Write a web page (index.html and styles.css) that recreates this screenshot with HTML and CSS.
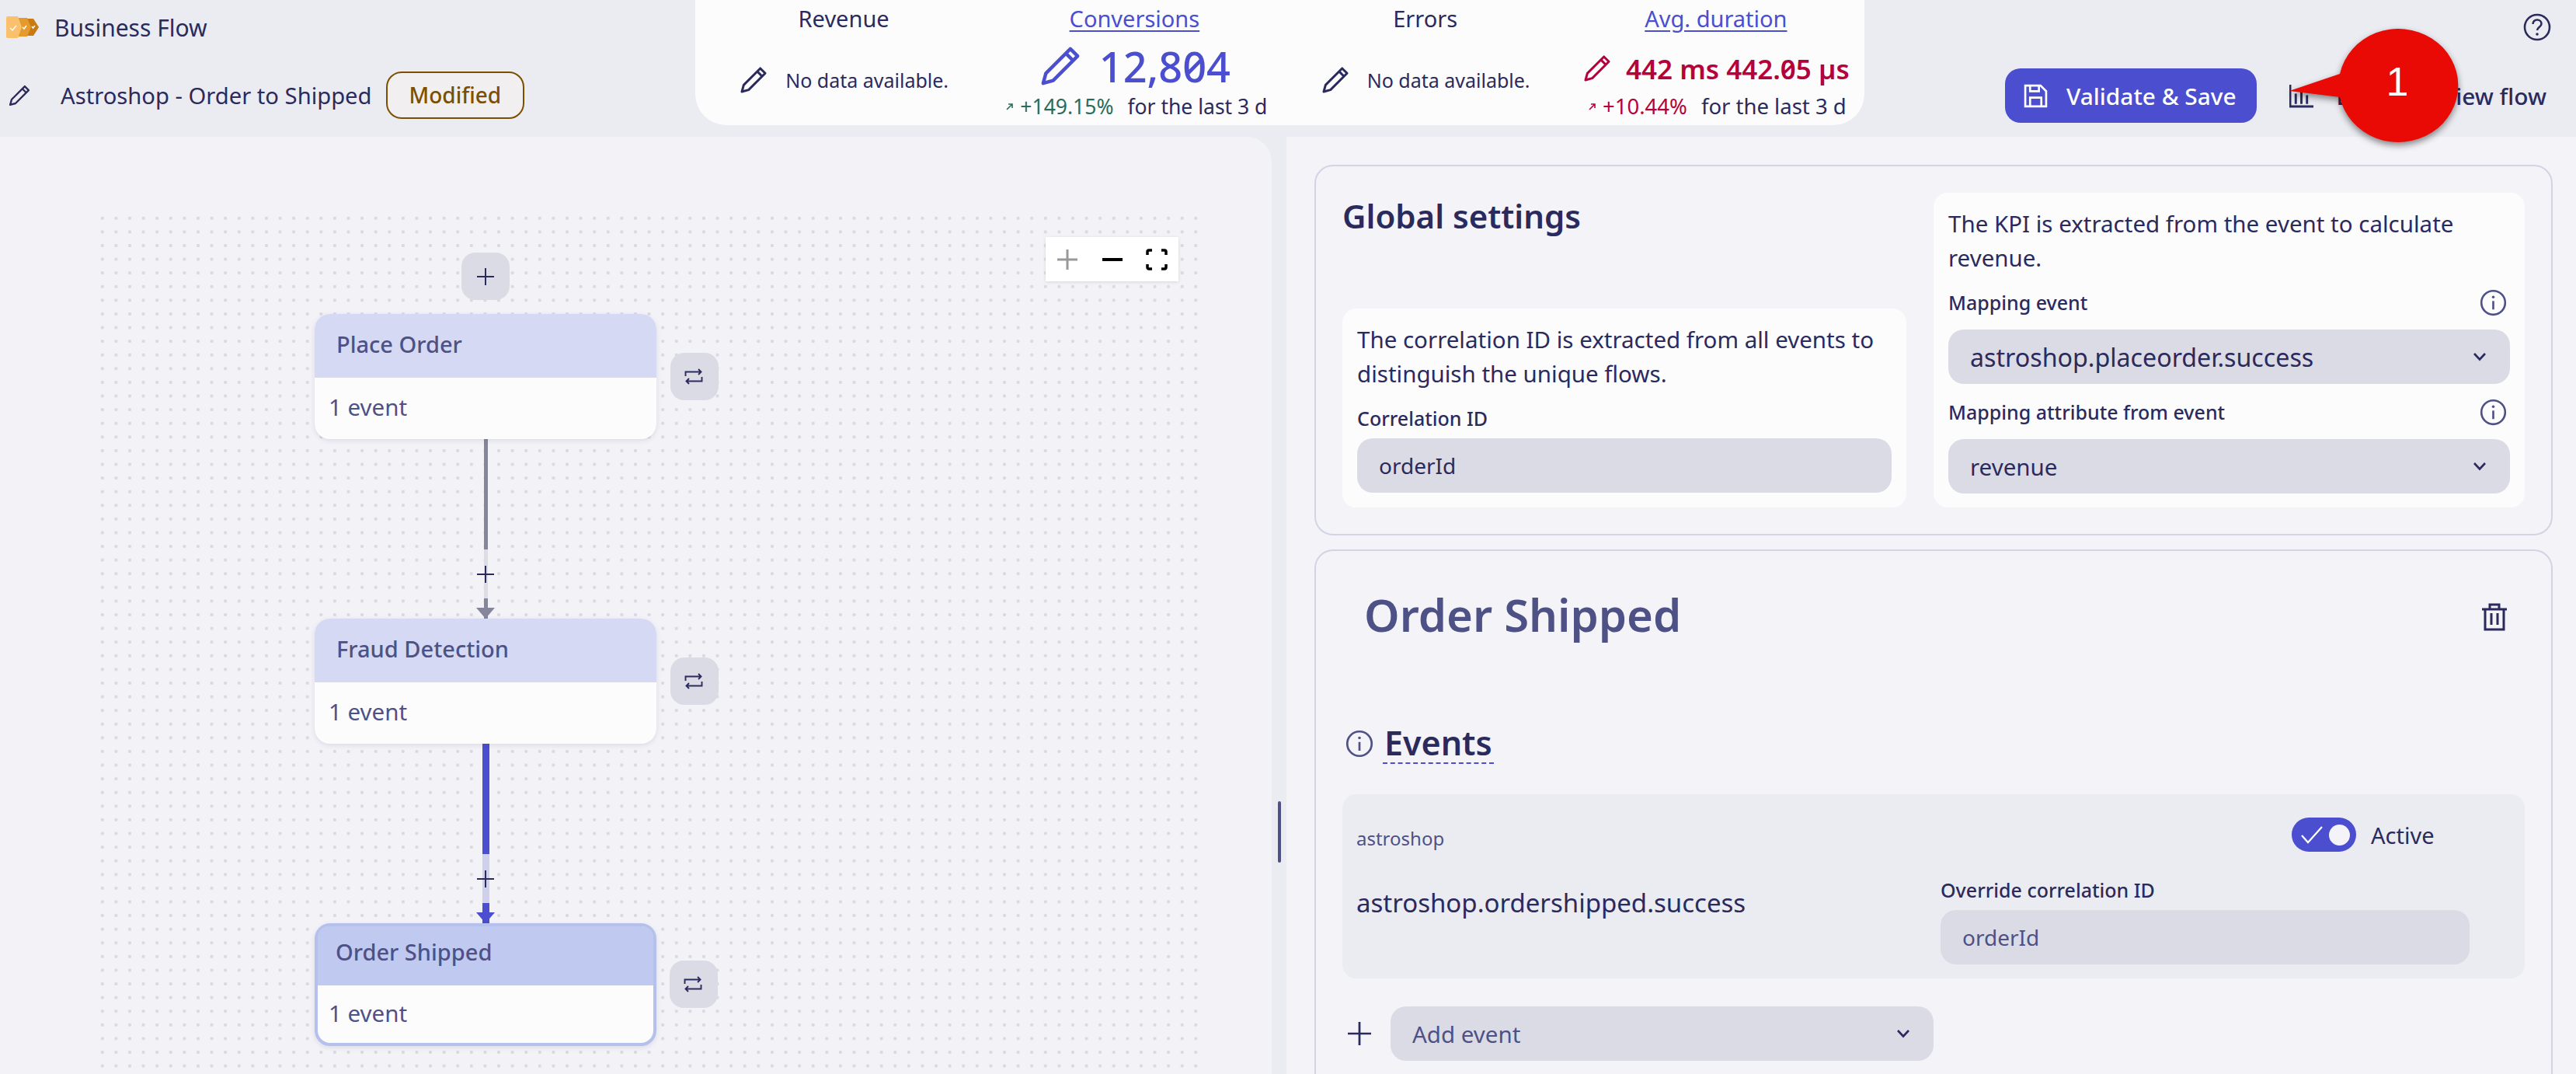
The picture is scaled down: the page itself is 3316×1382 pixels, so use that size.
FILE: index.html
```html
<!DOCTYPE html>
<html>
<head>
  <meta charset="utf-8">
  <title>Business Flow</title>
  <link rel="stylesheet" href="styles.css">
</head>
<body>
  <svg class="defs" width="0" height="0">
    <defs>
      <symbol id="pencil" viewBox="0 0 24 24"><path d="M17.5 2.5l4 4L8 20l-5.500 1.500L4 16zM15 5l4 4" fill="none" stroke="currentColor" stroke-width="1.900" stroke-linejoin="round"/></symbol>
      <symbol id="info" viewBox="0 0 24 24"><circle cx="12" cy="12" r="10.500" fill="none" stroke="currentColor" stroke-width="1.800"/><path d="M12 10.500V18" stroke="currentColor" stroke-width="1.800"/><circle cx="12" cy="7" r="1.200" fill="currentColor"/></symbol>
      <symbol id="chev" viewBox="0 0 18 12"><path d="M2 2l7 7.500L16 2" fill="none" stroke="currentColor" stroke-width="2.600"/></symbol>
      <symbol id="swap" viewBox="0 0 24 21"><path d="M1.500 10V4.500h20M18 1l3.500 3.500L18 8M22.500 11v5.500h-20M6 13l-3.500 3.500L6 20" fill="none" stroke="currentColor" stroke-width="1.900"/></symbol>
      <symbol id="plus" viewBox="0 0 22 22"><path d="M11 0v22M0 11h22" stroke="currentColor" stroke-width="2"/></symbol>
    </defs>
  </svg>

  <header class="topbar">
    <div class="title-col">
      <div class="app-row">
        <svg class="logo" viewBox="0 0 42 28">
          <path d="M26 3h9l7 11-7 11h-9z" fill="#c97a10"/>
          <path d="M13 2h14l5 12-5 12H13z" fill="#e59a2e"/>
          <path d="M2 0h13l5 14-5 14H2a2 2 0 0 1-2-2V2a2 2 0 0 1 2-2z" fill="#fbc06b"/>
          <path d="M5 15l3 3 5-6M21 14l2 2 3-4M33 13l1.500 2 2.500-3" fill="none" stroke="#fff" stroke-width="1.500"/>
        </svg>
        <span class="app-name">Business Flow</span>
      </div>
      <div class="flow-row">
        <svg class="ico-edit"><use href="#pencil"/></svg>
        <span class="flow-name">Astroshop - Order to Shipped</span>
        <span class="badge">Modified</span>
      </div>
    </div>

    <div class="kpis">
      <div class="kpi">
        <div class="kpi-title">Revenue</div>
        <div class="kpi-empty"><svg class="ico-kpi"><use href="#pencil"/></svg><span>No data available.</span></div>
      </div>
      <div class="kpi">
        <a class="kpi-title link">Conversions</a>
        <div class="kpi-value blue"><svg class="ico-big"><use href="#pencil"/></svg><span>12,804</span></div>
        <div class="kpi-sub"><span class="trend green"><svg class="ico-trend" viewBox="0 0 10 10"><path d="M1 9l7-7M3 2h5v5" fill="none" stroke="currentColor" stroke-width="1.600"/></svg>+149.15%</span><span>for the last 3 d</span></div>
      </div>
      <div class="kpi">
        <div class="kpi-title">Errors</div>
        <div class="kpi-empty"><svg class="ico-kpi"><use href="#pencil"/></svg><span>No data available.</span></div>
      </div>
      <div class="kpi">
        <a class="kpi-title link">Avg. duration</a>
        <div class="kpi-value red mid"><svg class="ico-kpi"><use href="#pencil"/></svg><span>442 ms 442.05 µs</span></div>
        <div class="kpi-sub"><span class="trend red"><svg class="ico-trend" viewBox="0 0 10 10"><path d="M1 9l7-7M3 2h5v5" fill="none" stroke="currentColor" stroke-width="1.600"/></svg>+10.44%</span><span>for the last 3 d</span></div>
      </div>
    </div>

    <div class="actions-col">
      <svg class="ico-help" viewBox="0 0 36 36">
        <circle cx="18" cy="18" r="16" fill="none" stroke="currentColor" stroke-width="2.600"/>
        <path d="M12.500 14c0-3.500 2.500-5.500 5.500-5.500s5.500 2 5.500 5c0 4.500-5.500 4.500-5.500 8.500" fill="none" stroke="currentColor" stroke-width="2.600"/>
        <circle cx="18" cy="27" r="1.800" fill="currentColor"/>
      </svg>
      <div class="actions">
        <button class="btn-primary">
          <svg class="ico-btn" viewBox="0 0 30 30"><path d="M2 2h19l7 7v19H2zM8 2v7h11V2M8 28V17h14v11" fill="none" stroke="currentColor" stroke-width="2.600"/></svg>
          Validate &amp; Save
        </button>
        <button class="btn-plain">
          <svg class="ico-btn" viewBox="0 0 30 30"><path d="M1 1v27h29M8 12v13M15 6v19M22 14v11" fill="none" stroke="currentColor" stroke-width="2.800"/></svg>
          <span class="btn-label">Data overview flow</span>
        </button>
      </div>
    </div>
  </header>

  <main class="content">
    <section class="canvas-panel">
      <div class="canvas">
        <div class="zoom-ctrl">
          <svg class="zc" viewBox="0 0 28 28"><path d="M14 1v26M1 14h26" stroke="#999" stroke-width="3"/></svg>
          <svg class="zc" viewBox="0 0 28 28"><path d="M1 14h26" stroke="#000" stroke-width="4"/></svg>
          <svg class="zc" viewBox="0 0 28 28"><path d="M2 8V4a2 2 0 0 1 2-2h4M20 2h4a2 2 0 0 1 2 2v4M26 20v4a2 2 0 0 1-2 2h-4M8 26H4a2 2 0 0 1-2-2v-4" fill="none" stroke="#000" stroke-width="3.500"/></svg>
        </div>
        <div class="flow">
          <div class="add-btn"><svg class="ico-plus"><use href="#plus"/></svg></div>
          <div class="node">
            <div class="node-head">Place Order</div>
            <div class="node-body">1 event</div>
            <div class="swap-btn"><svg class="ico-swap"><use href="#swap"/></svg></div>
          </div>
          <div class="edge">
            <div class="seg-solid"></div>
            <div class="seg-light"><svg class="ico-plus"><use href="#plus"/></svg></div>
            <div class="seg-end"></div>
          </div>
          <div class="node">
            <div class="node-head">Fraud Detection</div>
            <div class="node-body">1 event</div>
            <div class="swap-btn"><svg class="ico-swap"><use href="#swap"/></svg></div>
          </div>
          <div class="edge active">
            <div class="seg-solid"></div>
            <div class="seg-light"><svg class="ico-plus"><use href="#plus"/></svg></div>
            <div class="seg-end"></div>
          </div>
          <div class="node selected">
            <div class="node-head">Order Shipped</div>
            <div class="node-body">1 event</div>
            <div class="swap-btn"><svg class="ico-swap"><use href="#swap"/></svg></div>
          </div>
        </div>
      </div>
    </section>

    <div class="divider"><span class="handle"></span></div>

    <section class="side-panel">
      <div class="card global">
        <div class="global-left">
          <h2 class="global-title">Global settings</h2>
          <div class="subcard">
            <p>The correlation ID is extracted from all events to distinguish the unique flows.</p>
            <div class="field-label">Correlation ID</div>
            <div class="input">orderId</div>
          </div>
        </div>
        <div class="subcard">
          <p>The KPI is extracted from the event to calculate revenue.</p>
          <div class="field-label with-info">Mapping event<svg class="ico-info"><use href="#info"/></svg></div>
          <div class="input select large">astroshop.placeorder.success<svg class="ico-chev"><use href="#chev"/></svg></div>
          <div class="field-label with-info second">Mapping attribute from event<svg class="ico-info"><use href="#info"/></svg></div>
          <div class="input select">revenue<svg class="ico-chev"><use href="#chev"/></svg></div>
        </div>
      </div>

      <div class="card step">
        <div class="step-head">
          <h1 class="step-title">Order Shipped</h1>
          <svg class="ico-trash" viewBox="0 0 34 36"><path d="M1 8h32M11 8V2h12v6M5 8v26h24V8M13 13v15M21 13v15" fill="none" stroke="currentColor" stroke-width="3"/></svg>
        </div>
        <div class="events-head">
          <svg class="ico-info big"><use href="#info"/></svg>
          <span class="events-title">Events</span>
        </div>
        <div class="event-box">
          <div class="event-left">
            <div class="event-src">astroshop</div>
            <div class="event-name">astroshop.ordershipped.success</div>
          </div>
          <div class="event-right">
            <div class="toggle-row">
              <span class="toggle">
                <svg class="toggle-check" viewBox="0 0 28 24"><path d="M1 13l8 9L27 2" fill="none" stroke="#fff" stroke-width="2.200"/></svg>
                <span class="knob"></span>
              </span>
              <span class="toggle-label">Active</span>
            </div>
            <div class="field-label">Override correlation ID</div>
            <div class="input muted">orderId</div>
          </div>
        </div>
        <div class="add-row">
          <svg class="ico-add" viewBox="0 0 22 22"><path d="M11 0v22M0 11h22" stroke="currentColor" stroke-width="2"/></svg>
          <div class="input select muted add-select">Add event<svg class="ico-chev"><use href="#chev"/></svg></div>
        </div>
      </div>
    </section>
  </main>

  <!-- annotation on top of the screenshot -->
  <svg class="callout" viewBox="0 0 240 180">
    <path d="M17 97L82 75A77 73 0 1 1 82 105Z" fill="#e90a05"/>
    <text x="156" y="103" text-anchor="middle" class="callout-num">1</text>
  </svg>
</body>
</html>
```

FILE: styles.css
```css
* { box-sizing: border-box; }

html, body {
  margin: 0;
  width: 3316px;
  height: 1382px;
  overflow: hidden;
  background: #ebecf2;
  color: #2b2a5c;
  font-family: "Noto Sans", sans-serif;
  font-size: 28px;
}
.defs { position: absolute; }
svg { display: block; flex: none; }
button { font: inherit; border: 0; }

/* top bar */
.topbar {
  display: grid;
  grid-template-columns: 895px 1505px 1fr;
  height: 176px;
}
.title-col { padding: 20px 0 0 8px; }
.app-row { display: flex; align-items: center; gap: 20px; height: 30px; }
.logo { width: 42px; height: 28px; }
.app-name { font-size: 30px; }
.flow-row { display: flex; align-items: center; margin-top: 42px; height: 61px; }
.ico-edit { width: 30px; height: 30px; margin: 0 38px 0 2px; }
.flow-name { margin-right: 18px; font-size: 29.2px; }
.badge {
  padding: 0 28px;
  height: 61px;
  line-height: 57px;
  color: #7c4f00;
  font-weight: 500;
  background: #f2eff0;
  border: 2px solid #7c4f00;
  border-radius: 20px;
}

.kpis {
  display: grid;
  grid-template-columns: repeat(4, 1fr);
  height: 161px;
  padding: 0 4px;
  background: #fcfcfd;
  border-radius: 0 0 40px 40px;
}
.kpi { display: flex; flex-direction: column; align-items: center; }
.kpi-title { height: 50px; line-height: 48px; font-size: 29px; }
.link { color: #4a4ecf; text-decoration: underline; text-underline-offset: 4px; }
.kpi-empty { display: flex; align-items: center; gap: 22px; margin-top: 34px; font-size: 25px; }
.ico-kpi { width: 38px; height: 38px; }
.ico-big { width: 56px; height: 56px; }
.kpi-value { display: flex; align-items: center; gap: 22px; height: 70px; font-size: 54px; font-weight: 500; font-feature-settings: "zero"; }
.kpi-value.mid { gap: 18px; height: 76px; font-size: 35px; font-weight: 600; }
.blue { color: #4a4ecf; }
.red { color: #b4023a; }
.green { color: #2b6b5b; }
.kpi-sub { display: flex; gap: 18px; margin-left: 6px; font-size: 26.500px; line-height: 34px; }
.kpi-value.mid + .kpi-sub { margin: -6px 0 0 4px; font-size: 27.500px; }
.trend { display: flex; align-items: center; gap: 8px; }
.ico-trend { width: 10px; height: 10px; }

.actions-col { position: relative; }
.ico-help { position: absolute; left: 848px; top: 17px; width: 36px; height: 36px; }
.actions { display: flex; align-items: center; padding-top: 88px; padding-left: 181px; }
.btn-primary, .btn-plain { display: flex; align-items: center; height: 70px; font-size: 29.800px; font-weight: 500; }
.btn-primary {
  width: 324px;
  padding-left: 24px;
  gap: 24px;
  color: #fff;
  background: #4a4ecf;
  border-radius: 20px;
}
.btn-plain {
  margin-left: 42px;
  gap: 24px;
  color: #2b2a5c;
  background: none;
  padding: 0;
  white-space: nowrap;
}
.btn-label { display: block; width: 276px; text-align: right; }
.ico-btn { width: 31px; height: 31px; }

/* main area */
.content { display: flex; height: 1206px; }
.canvas-panel {
  width: 1637px;
  padding: 96px 0 0 123px;
  background: #f2f2f7;
  border-radius: 0 32px 0 0;
}
.canvas {
  position: relative;
  width: 1421px;
  height: 1110px;
  background-image: radial-gradient(circle, #d9d9e4 1.8px, transparent 2.4px);
  background-size: 17.6px 17.6px;
}
.zoom-ctrl {
  position: absolute;
  left: 1223px;
  top: 33px;
  display: flex;
  justify-content: space-between;
  align-items: center;
  width: 171px;
  height: 57px;
  padding: 0 14px;
  background: #fff;
  box-shadow: 0 1px 4px rgba(0, 0, 0, .12);
}
.zc { width: 28px; height: 28px; }

.flow {
  position: absolute;
  left: 282px;
  top: 53px;
  width: 440px;
  display: flex;
  flex-direction: column;
  align-items: center;
}
.add-btn, .swap-btn {
  display: flex;
  align-items: center;
  justify-content: center;
  width: 62px;
  height: 61px;
  background: #dbdbe6;
  border-radius: 18px;
}
.add-btn { margin-bottom: 18px; }
.ico-plus { width: 22px; height: 22px; }
.ico-swap { width: 24px; height: 21px; margin-left: -3px; }

.node {
  position: relative;
  width: 440px;
  color: #4e5185;
  background: #fcfcfd;
  border-radius: 20px;
  box-shadow: 0 2px 6px rgba(60, 60, 110, .12);
}
.node-head {
  height: 82px;
  line-height: 78px;
  padding-left: 28px;
  font-size: 29px;
  font-weight: 500;
  background: #d5d9f3;
  border-radius: 20px 20px 0 0;
}
.node-body { height: 79px; line-height: 75px; padding-left: 18px; font-size: 29.500px; }
.swap-btn { position: absolute; left: 458px; top: 50px; color: #2b2a5c; }
.node.selected { height: 158px; border: 4px solid #b6c0ec; }
.selected .swap-btn { left: 453px; top: 44px; }
.selected .node-head { height: 76px; line-height: 66px; padding-left: 23px; background: #c0caf0; border-radius: 14px 14px 0 0; }
.selected .node-body { height: 74px; line-height: 72px; padding-left: 14px; border-radius: 0 0 14px 14px; }

.edge { display: flex; flex-direction: column; align-items: center; width: 9px; height: 231px; }
.seg-solid { width: 5px; height: 142px; background: #85859c; }
.seg-light {
  position: relative;
  display: flex;
  align-items: center;
  justify-content: center;
  width: 5px;
  height: 63px;
  background: #dddde6;
}
.seg-light .ico-plus { position: absolute; color: #2b2a5c; }
.seg-end { position: relative; width: 5px; height: 26px; background: #85859c; }
.seg-end::after {
  content: "";
  position: absolute;
  left: -10px;
  top: 12px;
  border-left: 12.5px solid transparent;
  border-right: 12.5px solid transparent;
  border-top: 14px solid #85859c;
}
.edge.active .seg-solid, .edge.active .seg-end { width: 9px; background: #4a4ecf; }
.edge.active .seg-light { width: 9px; background: #cfd0ec; }
.edge.active .seg-end::after { left: -8px; border-top-color: #4a4ecf; }

.divider { position: relative; width: 19px; background: #ebecf2; }
.handle {
  position: absolute;
  left: 8px;
  top: 855px;
  width: 4px;
  height: 79px;
  background: #4e5185;
  border-radius: 2px;
}

/* right side */
.side-panel {
  display: flex;
  flex-direction: column;
  gap: 18px;
  width: 1660px;
  padding: 36px 30px 0 36px;
  background: #f3f3f8;
}
.card { border: 2px solid #d2d4e4; border-radius: 24px; }
.global {
  display: grid;
  grid-template-columns: 726px 761px;
  gap: 35px;
  height: 477px;
  padding: 34px 34px;
}
.global-left { display: flex; flex-direction: column; justify-content: space-between; }
.global-title { margin: 0; font-size: 42px; font-weight: 600; line-height: 60px; }
.subcard { padding: 18px 19px; background: #fcfcfd; border-radius: 18px; }
.global-left .subcard { height: 256px; }
.subcard p { margin: 0; font-size: 29.500px; line-height: 44px; }
.field-label {
  display: flex;
  align-items: center;
  justify-content: space-between;
  height: 36px;
  margin: 17px 0 8px;
  font-size: 25px;
  font-weight: 500;
}
.field-label.with-info { margin: 17px 0 17px; }
.field-label.second { margin-top: 18px; }
.input {
  display: flex;
  align-items: center;
  justify-content: space-between;
  height: 70px;
  padding: 0 28px;
  background: #dbdbe6;
  border-radius: 20px;
}
.input.select { font-size: 29.500px; }
.input.select.large { font-size: 32.200px; }
.input.muted { color: #4e5185; }
.ico-info { width: 35px; height: 35px; margin-right: 4px; color: #4e5185; }
.ico-chev { width: 18px; height: 12px; margin-right: 2px; color: #2b2a5c; }

.step { flex: 1; padding: 0 34px; border-bottom: 0; border-radius: 24px 24px 0 0; }
.step-head { display: flex; justify-content: space-between; padding-top: 42px; height: 223px; }
.step-title { margin: 0 0 0 28px; font-size: 58px; font-weight: 600; line-height: 80px; color: #4e5185; }
.ico-trash { width: 34px; height: 36px; margin: 25px 22px 0 0; color: #2b2a5c; }
.events-head { display: flex; align-items: center; gap: 12px; height: 50px; margin-left: 4px; }
.ico-info.big { width: 36px; height: 36px; margin: 0; }
.events-title { font-size: 43px; font-weight: 600; line-height: 50px; border-bottom: 2px dashed #4a4ecf; padding: 0 2px; }
.event-box {
  display: flex;
  justify-content: space-between;
  width: 1522px;
  height: 237px;
  margin-top: 40px;
  padding: 30px 71px 0 18px;
  background: #ebecf2;
  border-radius: 18px;
}
.event-src { margin-top: 10px; font-size: 24px; color: #4e5185; }
.event-name { margin-top: 44px; font-size: 33px; }
.event-right { width: 681px; }
.toggle-row { display: flex; align-items: center; gap: 19px; height: 44px; margin-left: 452px; }
.toggle-label { font-size: 29px; }
.toggle {
  display: flex;
  align-items: center;
  justify-content: space-between;
  width: 83px;
  height: 44px;
  padding: 0 8px 0 12px;
  background: #4a4ecf;
  border-radius: 22px;
}
.toggle-check { width: 28px; height: 24px; }
.knob { width: 27px; height: 27px; background: #f3f3f8; border-radius: 50%; }
.event-right .field-label { margin: 31px 0 8px; }
.add-row { display: flex; align-items: center; gap: 25px; width: 754px; margin: 36px 0 0 7px; }
.ico-add { width: 30px; height: 30px; }
.add-select { flex: 1; }

/* annotation */
.callout {
  position: absolute;
  left: 2930px;
  top: 20px;
  width: 240px;
  height: 180px;
  filter: drop-shadow(0 4px 4px rgba(0, 0, 0, .45));
}
.callout-num { font-family: "Liberation Sans", sans-serif; font-size: 52px; fill: #fff; }
```
